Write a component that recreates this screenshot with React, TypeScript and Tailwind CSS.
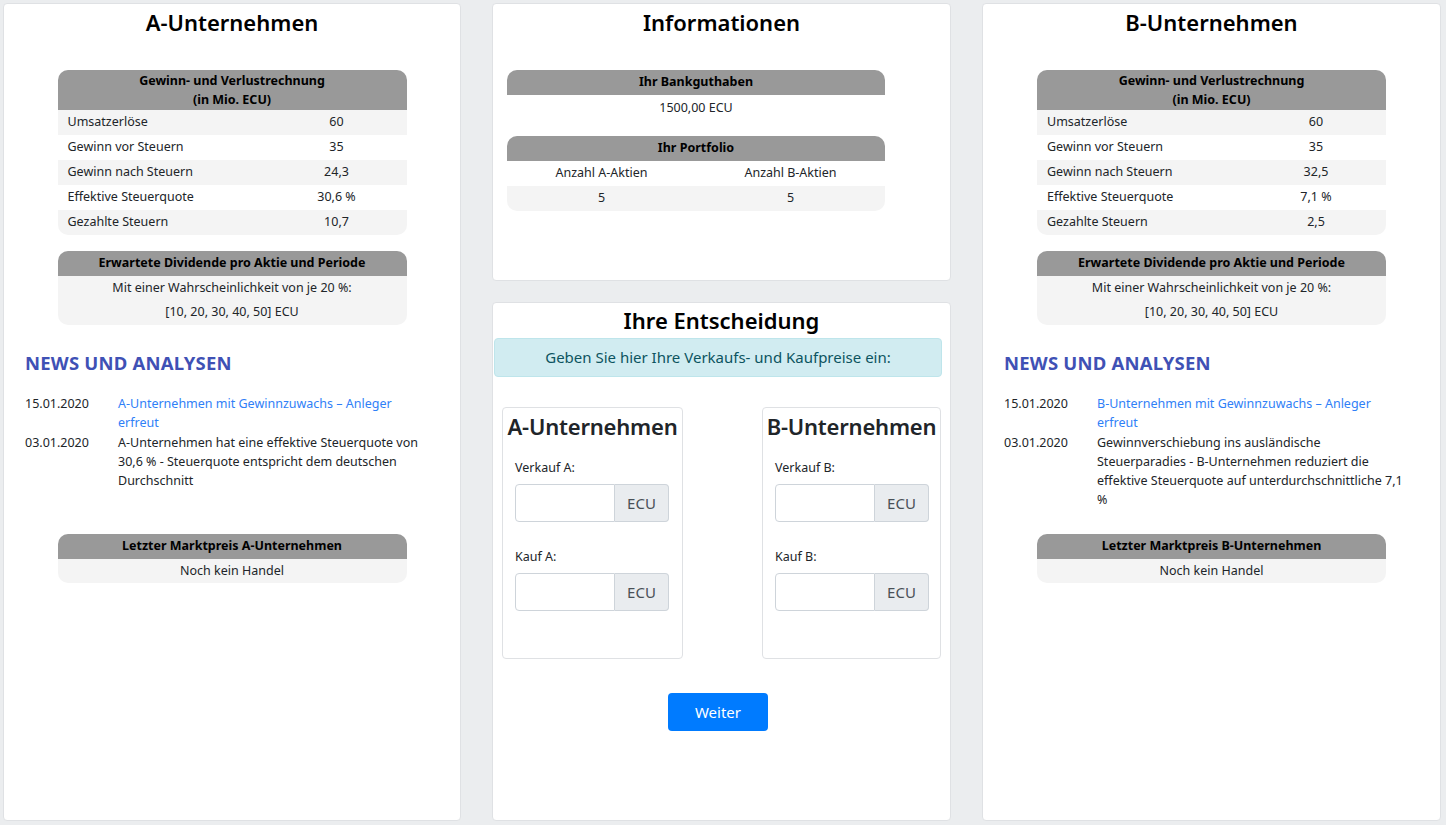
import React from 'react';

type Row = [string, string];

const fontStack = { fontFamily: '"Noto Sans", "Open Sans", sans-serif' };

function GuvTable({ rows }: { rows: Row[] }) {
  return (
    <div className="mx-auto w-[349px] rounded-[10px] overflow-hidden text-[12.5px]">
      <div className="bg-[#999999] text-center font-bold leading-[19px] pt-[1px] pb-[1px] text-black">
        Gewinn- und Verlustrechnung
        <br />
        (in Mio. ECU)
      </div>
      {rows.map(([label, value], i) => (
        <div
          key={label}
          className={`grid grid-cols-[209px_140px] h-[25px] items-center ${i % 2 === 0 ? 'bg-[#f4f4f4]' : 'bg-white'}`}
        >
          <span className="pl-[10px]">{label}</span>
          <span className="text-center">{value}</span>
        </div>
      ))}
    </div>
  );
}

function BoxHeader({ children }: { children: React.ReactNode }) {
  return (
    <div className="bg-[#999999] h-[25px] flex items-center justify-center font-bold text-[12.5px] text-black">
      {children}
    </div>
  );
}

function Company({
  name,
  rows,
  news,
}: {
  name: string;
  rows: Row[];
  news: { date: string; text: string; link?: boolean }[];
}) {
  return (
    <div className="bg-white border border-[#dfe1e4] rounded-[4px] h-[818px] pt-[3px]">
      <h2 className="text-center text-[22px] font-semibold leading-[30px] text-black">{name}</h2>
      <div className="mt-[33px]">
        <GuvTable rows={rows} />
      </div>
      <div className="mx-auto w-[349px] mt-[16px] rounded-[10px] overflow-hidden text-[12.5px]">
        <BoxHeader>Erwartete Dividende pro Aktie und Periode</BoxHeader>
        <div className="bg-[#f4f4f4] text-center pb-[1px]">
          <div className="h-[24px] leading-[24px]">Mit einer Wahrscheinlichkeit von je 20 %:</div>
          <div className="h-[24px] leading-[24px]">[10, 20, 30, 40, 50] ECU</div>
        </div>
      </div>
      <h3 className="ml-[21px] mt-[25px] text-[18.5px] font-bold text-[#3f51b5] leading-[26px] tracking-[0.2px]">
        NEWS UND ANALYSEN
      </h3>
      <div className="ml-[21px] w-[404px] mt-[18px] text-[12.5px] leading-[19px] h-[140px]">
        {news.map((n) => (
          <div key={n.date} className="flex mb-[1px]">
            <span className="w-[93px] shrink-0">{n.date}</span>
            <span className={n.link ? 'text-[#2f80f7]' : ''}>{n.text}</span>
          </div>
        ))}
      </div>
      <div className="mx-auto w-[349px] rounded-[10px] overflow-hidden text-[12.5px]">
        <BoxHeader>Letzter Marktpreis {name}</BoxHeader>
        <div className="bg-[#f4f4f4] text-center h-[24px] leading-[24px]">Noch kein Handel</div>
      </div>
    </div>
  );
}

function PriceInput({ label }: { label: string }) {
  return (
    <div>
      <label className="block text-[12.5px] leading-[18px] mb-[7px]">{label}</label>
      <div className="flex h-[38px] w-[154px]">
        <input className="w-[100px] border border-[#ced4da] rounded-l-[4px] bg-white outline-none px-2" />
        <span className="w-[54px] flex items-center justify-center bg-[#e9ecef] border border-l-0 border-[#ced4da] rounded-r-[4px] text-[15px] text-[#495057]">
          ECU
        </span>
      </div>
    </div>
  );
}

function Decision({ name, letter, width }: { name: string; letter: string; width: string }) {
  return (
    <div className={`${width} h-[252px] border border-[#dfe1e4] rounded-[4px] pt-[3px]`}>
      <h3 className="text-center text-[22px] font-semibold leading-[30px] whitespace-nowrap tracking-[-0.2px]">{name}</h3>
      <div className="pl-[12px] mt-[18px]">
        <PriceInput label={`Verkauf ${letter}:`} />
        <div className="mt-[26px]">
          <PriceInput label={`Kauf ${letter}:`} />
        </div>
      </div>
    </div>
  );
}

export default function App() {
  return (
    <div className="min-h-[825px] bg-[#ebedef] text-[#212529]" style={fontStack}>
      <div className="grid grid-cols-[458px_459px_459px] gap-x-[31px] pl-[3px] pt-[3px]">
        <Company
          name="A-Unternehmen"
          rows={[
            ['Umsatzerlöse', '60'],
            ['Gewinn vor Steuern', '35'],
            ['Gewinn nach Steuern', '24,3'],
            ['Effektive Steuerquote', '30,6 %'],
            ['Gezahlte Steuern', '10,7'],
          ]}
          news={[
            { date: '15.01.2020', text: 'A-Unternehmen mit Gewinnzuwachs – Anleger erfreut', link: true },
            {
              date: '03.01.2020',
              text: 'A-Unternehmen hat eine effektive Steuerquote von 30,6 % - Steuerquote entspricht dem deutschen Durchschnitt',
            },
          ]}
        />

        {/* middle column */}
        <div className="flex flex-col gap-[21px]">
          <div className="bg-white border border-[#dfe1e4] rounded-[4px] h-[278px] pt-[3px]">
            <h2 className="text-center text-[22px] font-semibold leading-[30px] text-black">Informationen</h2>
            <div className="ml-[14px] w-[378px] mt-[33px] text-[12.5px]">
              <div className="rounded-t-[10px] overflow-hidden">
                <BoxHeader>Ihr Bankguthaben</BoxHeader>
              </div>
              <div className="h-[25px] leading-[25px] text-center">1500,00 ECU</div>
              <div className="mt-[16px] rounded-[10px] overflow-hidden">
                <BoxHeader>Ihr Portfolio</BoxHeader>
                <div className="grid grid-cols-2 h-[25px] items-center text-center bg-white">
                  <span>Anzahl A-Aktien</span>
                  <span>Anzahl B-Aktien</span>
                </div>
                <div className="grid grid-cols-2 h-[25px] items-center text-center bg-[#f4f4f4]">
                  <span>5</span>
                  <span>5</span>
                </div>
              </div>
            </div>
          </div>

          <div className="bg-white border border-[#dfe1e4] rounded-[4px] h-[519px] pt-[2px]">
            <h2 className="text-center text-[22px] font-semibold leading-[30px] text-black">Ihre Entscheidung</h2>
            <div className="ml-[1px] mr-[8px] mt-[3px] h-[39px] flex items-center justify-center bg-[#d1ecf1] border border-[#bee5eb] rounded-[4px] text-[#0c5460] text-[15px]">
              Geben Sie hier Ihre Verkaufs- und Kaufpreise ein:
            </div>
            <div className="flex justify-between px-[9px] mt-[30px]">
              <Decision name="A-Unternehmen" letter="A" width="w-[181px]" />
              <Decision name="B-Unternehmen" letter="B" width="w-[179px]" />
            </div>
            <div className="flex justify-center pr-[7px] mt-[34px]">
              <button className="w-[100px] h-[38px] bg-[#007bff] text-white rounded-[4px] text-[15px]">
                Weiter
              </button>
            </div>
          </div>
        </div>

        <Company
          name="B-Unternehmen"
          rows={[
            ['Umsatzerlöse', '60'],
            ['Gewinn vor Steuern', '35'],
            ['Gewinn nach Steuern', '32,5'],
            ['Effektive Steuerquote', '7,1 %'],
            ['Gezahlte Steuern', '2,5'],
          ]}
          news={[
            { date: '15.01.2020', text: 'B-Unternehmen mit Gewinnzuwachs – Anleger erfreut', link: true },
            {
              date: '03.01.2020',
              text: 'Gewinnverschiebung ins ausländische Steuerparadies - B-Unternehmen reduziert die effektive Steuerquote auf unterdurchschnittliche 7,1 %',
            },
          ]}
        />
      </div>
    </div>
  );
}
